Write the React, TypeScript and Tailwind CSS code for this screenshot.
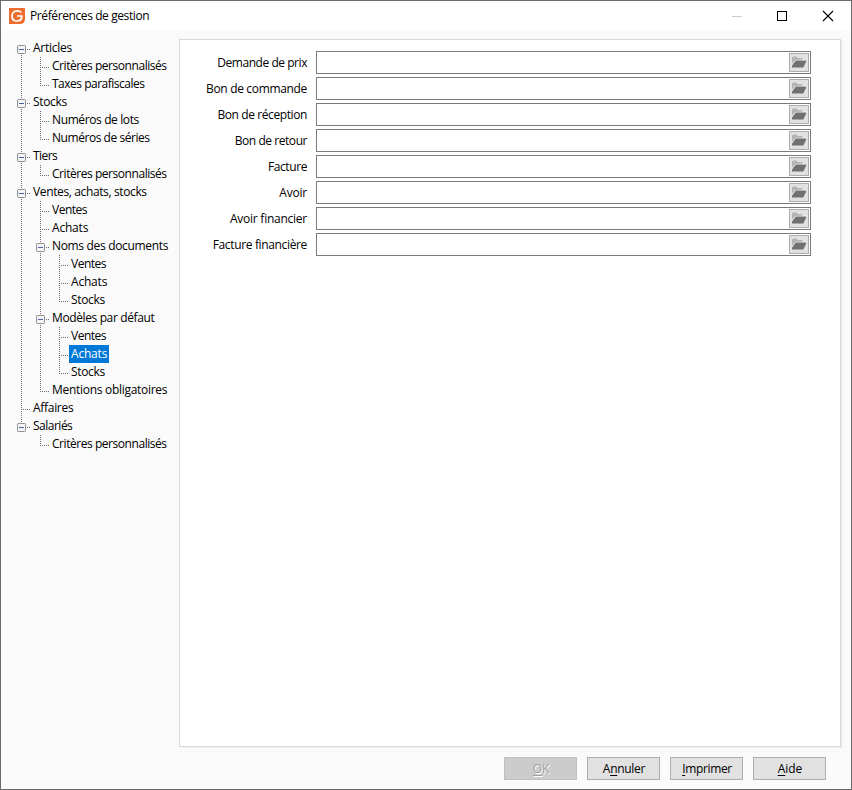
interface TreeItem {
  label: string
  level: number
  open?: boolean
  selected?: boolean
}

const items: TreeItem[] = [
  { label: 'Articles', level: 0, open: true },
  { label: 'Critères personnalisés', level: 1 },
  { label: 'Taxes parafiscales', level: 1 },
  { label: 'Stocks', level: 0, open: true },
  { label: 'Numéros de lots', level: 1 },
  { label: 'Numéros de séries', level: 1 },
  { label: 'Tiers', level: 0, open: true },
  { label: 'Critères personnalisés', level: 1 },
  { label: 'Ventes, achats, stocks', level: 0, open: true },
  { label: 'Ventes', level: 1 },
  { label: 'Achats', level: 1 },
  { label: 'Noms des documents', level: 1, open: true },
  { label: 'Ventes', level: 2 },
  { label: 'Achats', level: 2 },
  { label: 'Stocks', level: 2 },
  { label: 'Modèles par défaut', level: 1, open: true },
  { label: 'Ventes', level: 2 },
  { label: 'Achats', level: 2, selected: true },
  { label: 'Stocks', level: 2 },
  { label: 'Mentions obligatoires', level: 1 },
  { label: 'Affaires', level: 0 },
  { label: 'Salariés', level: 0, open: true },
  { label: 'Critères personnalisés', level: 1 },
]

const fields = [
  'Demande de prix',
  'Bon de commande',
  'Bon de réception',
  'Bon de retour',
  'Facture',
  'Avoir',
  'Avoir financier',
  'Facture financière',
]

// letter spacing of each caption
const tracking: Record<string, string> = {
  'Articles':               'tracking-[-0.25px]',
  'Critères personnalisés': 'tracking-[-0.45px]',
  'Taxes parafiscales':     'tracking-[-0.5px]',
  'Stocks':                 'tracking-[-0.33px]',
  'Numéros de lots':        'tracking-[-0.38px]',
  'Numéros de séries':      'tracking-[-0.45px]',
  'Tiers':                  'tracking-[-0.55px]',
  'Ventes, achats, stocks': 'tracking-[-0.37px]',
  'Ventes':                 'tracking-[-0.5px]',
  'Achats':                 'tracking-[-0.2px]',
  'Noms des documents':     'tracking-[-0.33px]',
  'Modèles par défaut':     'tracking-[-0.38px]',
  'Mentions obligatoires':  'tracking-[-0.29px]',
  'Affaires':               'tracking-[-0.3px]',
  'Salariés':               'tracking-[-0.5px]',
  'Demande de prix':        'tracking-[-0.45px]',
  'Bon de commande':        'tracking-[-0.33px]',
  'Bon de réception':       'tracking-[-0.4px]',
  'Bon de retour':          'tracking-[-0.45px]',
  'Facture':                'tracking-[-0.4px]',
  'Avoir':                  'tracking-[-0.2px]',
  'Avoir financier':        'tracking-[-0.25px]',
  'Facture financière':     'tracking-[-0.35px]',
  'Annuler':                'tracking-[-0.3px]',
  'Imprimer':               'tracking-[-0.35px]',
}

// true when another item of the same branch follows at this level
function continues(index: number, level: number) {
  for (let i = index + 1; i < items.length; i++) {
    if (items[i].level < level) return false
    if (items[i].level === level) return true
  }
  return false
}

function Guide({ index, level }: { index: number; level: number }) {
  const item = items[index]
  const own = item.level === level
  const below = continues(index, level)
  const top = index === 0 ? 10 : 0
  const bottom = below ? 18 : own ? 10 : 0
  return (
    <svg width="19" height="18" viewBox="0 0 19 18" className="shrink-0" shapeRendering="crispEdges">
      {bottom > top && <line x1="9.5" y1={top} x2="9.5" y2={bottom} stroke="#707070" strokeDasharray="1 1" />}
      {own && <line x1="9" y1="10.5" x2="18" y2="10.5" stroke="#707070" strokeDasharray="1 1" />}
      {own && item.open && (
        <g shapeRendering="auto">
          <rect x="5.5" y="6.5" width="8" height="8" rx="0.8" fill="#f4f4f4" stroke="#919191" />
          <rect x="7" y="10" width="5" height="1" fill="#4b63a7" />
        </g>
      )}
    </svg>
  )
}

function TreeRow({ item, index }: { item: TreeItem; index: number }) {
  return (
    <div className="flex h-[18px]">
      {Array.from({ length: item.level + 1 }, (_, level) => (
        <Guide key={level} index={index} level={level} />
      ))}
      <span
        className={`px-0.5 leading-[18px] whitespace-nowrap ${tracking[item.label]} ${
          item.selected ? 'w-10 bg-[#0078d7] text-white' : ''
        }`}
      >
        {item.label}
      </span>
    </div>
  )
}

function FolderIcon() {
  return (
    <svg width="18" height="17" viewBox="0 0 18 17">
      <path d="M2 13V3.500L3 2.500H6.500L7.500 4H12.500V6H6L2 13Z" fill="#b4b4b4" />
      <path d="M1.800 12L2 10L5.500 6L16 5.500V7L13 13H2Z" fill="#f8f8f8" />
      <path d="M2 13.500V11.500L5.800 6.500H16V8L13.300 13.500Z" fill="#707070" />
    </svg>
  )
}

function Field({ label }: { label: string }) {
  return (
    <div className="flex h-[23px] items-center">
      <label className={`w-[127px] text-right whitespace-nowrap ${tracking[label]}`}>{label}</label>
      <div className="ml-[9px] flex h-[23px] w-[495px] justify-end border border-[#7a7a7a] bg-white p-px">
        <button className="h-[19px] w-5 border border-[#adadad] bg-[#e1e1e1]">
          <FolderIcon />
        </button>
      </div>
    </div>
  )
}

function DialogButton({ label, hotkey, disabled }: { label: string; hotkey: number; disabled?: boolean }) {
  return (
    <button
      disabled={disabled}
      className={`h-[23px] w-[73px] border pl-px leading-[21px] ${tracking[label] ?? ''} ${
        disabled
          ? 'border-[#bfbfbf] bg-[#cccccc] text-[#a0a0a0] [text-shadow:1px_1px_0_#ffffff]'
          : 'border-[#adadad] bg-[#e1e1e1]'
      }`}
    >
      {label.slice(0, hotkey)}
      <span className="underline underline-offset-2">{label[hotkey]}</span>
      {label.slice(hotkey + 1)}
    </button>
  )
}

function TitleBar() {
  return (
    <header className="flex h-[30px] items-center bg-white pl-2">
      <svg width="16" height="16" viewBox="0 0 16 16">
        <path d="M0 0H16V11Q16 16 11 16H0Z" fill="#ed6e2e" />
        <path d="M12.300 4.500Q10.800 2.800 8.300 2.800C5 2.800 3 5 3 8C3 11 5 13 8 13C11 13 12.800 11.200 12.800 8H8" fill="none" stroke="white" strokeWidth="1.700" />
      </svg>
      <h1 className="ml-[5px] tracking-[-0.4px]">Préférences de gestion</h1>
      <svg width="104" height="12" viewBox="0 0 104 12" className="mr-[17px] ml-auto" fill="none">
        <path d="M2 6.500H12" stroke="#cccccc" />
        <rect x="47.500" y="1.500" width="9" height="9" stroke="black" />
        <path d="M93 1L103 11M103 1L93 11" stroke="black" strokeWidth="1.100" />
      </svg>
    </header>
  )
}

export default function App() {
  return (
    <div
      className="flex h-[790px] w-[852px] flex-col border border-[#6b6b6b] bg-[#fafafa] text-[12px] text-black"
      style={{ fontFamily: '"Open Sans", "Noto Sans", sans-serif' }}
    >
      <TitleBar />
      <main className="mt-2 flex h-[708px]">
        <nav className="w-[178px] shrink-0 pl-[11px]">
          {items.map((item, index) => (
            <TreeRow key={index} item={item} index={index} />
          ))}
        </nav>
        <section className="flex w-[662px] flex-col gap-[3px] border border-[#d9d9d9] bg-white pt-[11px] shadow-[2px_1px_0_#f0f0f0]">
          {fields.map(label => (
            <Field key={label} label={label} />
          ))}
        </section>
      </main>
      <footer className="mt-[10px] flex justify-end gap-[10px] pr-[25px]">
        <DialogButton label="OK" hotkey={0} disabled />
        <DialogButton label="Annuler" hotkey={1} />
        <DialogButton label="Imprimer" hotkey={0} />
        <DialogButton label="Aide" hotkey={0} />
      </footer>
    </div>
  )
}
